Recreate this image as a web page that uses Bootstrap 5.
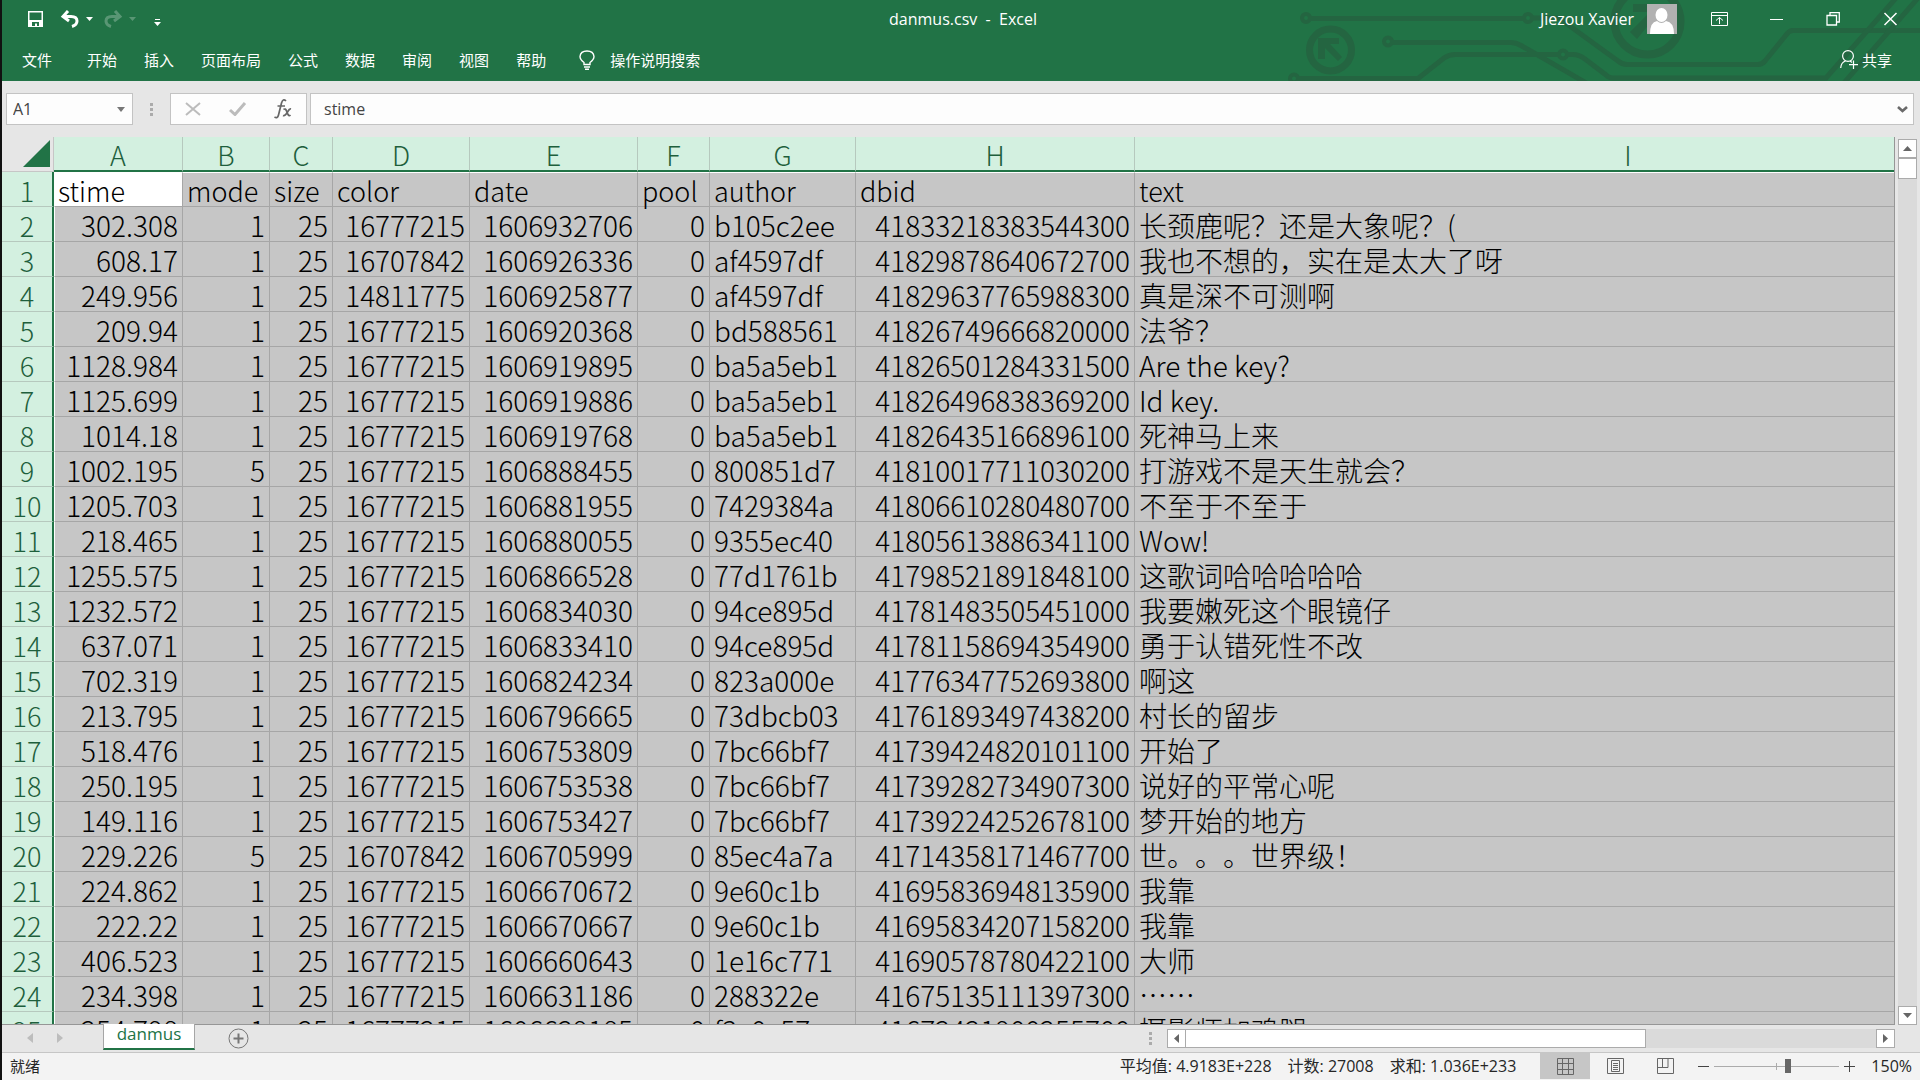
<!DOCTYPE html>
<html lang="zh-CN">
<head>
<meta charset="utf-8">
<meta name="viewport" content="width=device-width, initial-scale=1">
<title>danmus.csv - Excel</title>
<link rel="stylesheet" href="https://cdn.jsdelivr.net/npm/bootstrap@5.3.0/dist/css/bootstrap.min.css">
<style>
:root { --xl-green: #217346; --xl-line: #a6a6a6; --xl-head: #d3f0e0; --xl-chrome: #e6e6e6; }
body { font-family: "Open Sans", "Noto Sans CJK SC", sans-serif; font-size: 15px; line-height: 20px; color: #262626; background: var(--xl-chrome); border-left: 2px solid #111; }
button { background: none; border: 0; padding: 0; color: inherit; display: inline-flex; align-items: center; justify-content: center; flex: none; }
svg { display: block; flex: none; }
.ui-lg { font-size: 16px; }
.app-head { background: var(--xl-green); color: #fff; }
.circuit { position: absolute; right: 0; top: 0; }
.title-row { height: 38px; }
.title-row .side { flex: 1 1 0; }
.title-row .ui-lg { padding-bottom: 1px; }
.quick { padding-left: 25px; }
.quick .caret { margin: 0 10px 0 6px; }
.dim { opacity: .25; }
.win { gap: 40px; padding-right: 21px; }
.user { gap: 13px; margin-right: -6px; }
.ribbon-row { height: 43px; padding: 0 28px 0 20px; }
.ribbon-row a { color: #fff; text-decoration: none; }
.tabs { gap: 27px; }
.tabs a:first-child { margin-right: 8px; }
.tell { gap: 15px; margin-left: 33px; }
.formula-row { padding: 12px 6px 12px 4px; }
.fbox { height: 32px; background: #fdfdfd; border: 1px solid #c3c3c3; }
.fbox input { border: 0; background: none; outline: 0; min-width: 0; color: #444; padding: 0; }
.name-box { width: 127px; padding: 0 7px 0 6px; }
.fx-box { width: 137px; padding: 0 14px; margin-left: 17px; }
.text-box { margin-left: 3px; padding: 0 5px 0 13px; }
.dots { margin-left: 17px; }
.sheet-area { min-height: 0; }
.sheet-view { min-width: 0; overflow: hidden; border-bottom: 1px solid #969696; border-right: 1px solid #969696; }
.sheet { width: 2120px; table-layout: fixed; border-collapse: separate; border-spacing: 0; font-family: "Noto Sans CJK SC", sans-serif; font-weight: 300; font-size: 28px; line-height: 31px; color: #000; text-spacing-trim: space-all; font-feature-settings: "chws" 0, "halt" 0; }
.sheet th, .sheet td { padding: 3px 4px 0; height: 35px; white-space: nowrap; border: 0 solid var(--xl-line); font-weight: 300; }
.sheet th { font-size: 27px; }
.sheet thead th { background: var(--xl-head); color: #1e5f3c; text-align: center; line-height: 30px; border-right: 1px solid #b6c9be; border-bottom: 2px solid var(--xl-green); }
.sheet thead th.corner { background: var(--xl-chrome); border-right: 1px solid #c6c6c6; border-bottom: 1px solid #c6c6c6; vertical-align: bottom; padding: 0 3px 4px; }
.sheet tbody th { background: var(--xl-head); color: #1e5f3c; text-align: center; border-bottom: 1px solid #b6c9be; border-right: 2px solid var(--xl-green); }
.sheet td { background: #c6c6c6; border-right-width: 1px; border-bottom-width: 1px; text-align: right; }
.sheet tbody td:nth-child(2) { border-left: 1px solid #fff; }
.sheet td.txt { text-align: left; }
.sheet td:last-child { text-align: left; }
.sheet tbody tr:first-child td { border-top: 1px solid #fff; font-size: 27px; padding-top: 2px; }
.sheet tbody tr:first-child td:nth-child(2) { background: #fff; padding-left: 3px; }
.vbar { width: 19px; flex: none; margin: 2px 3px 0 3px; background: #dadada; }
.sbtn { background: #fff; border: 1px solid #ababab; width: 19px; height: 19px; }
.vthumb { background: #fff; border: 1px solid #ababab; height: 21px; }
.tab-row { height: 29px; border-bottom: 1px solid #c6c6c6; }
.tab-nav { width: 101px; height: 27px; padding-left: 25px; }
.sheet-tab { background: #fff; color: var(--xl-green); border: 1px solid #a6a6a6; border-top: 0; border-bottom: 2px solid var(--xl-green); margin-top: -1px; height: 26px; width: 92px; font-size: 17px; line-height: 20px; text-align: center; text-decoration: none; position: relative; }
.add-tab { height: 27px; margin-left: 33px; }
.hbar { width: 728px; height: 19px; background: #dadada; margin: 4px 25px 0 11px; }
.hthumb { background: #fff; border: 1px solid #ababab; border-left: 0; width: 460px; height: 19px; }
.status-row { height: 27px; background: #f3f3f3; padding: 0 8px 1px 8px; }
.view-btn { width: 50px; height: 26px; }
.view-btn.on { background: #c6c6c6; }
.totals { gap: 16px; margin-right: 24px; }
.zoom-range { appearance: none; width: 125px; height: 17px; margin: 0 5px; background: linear-gradient(#ababab, #ababab) center / 100% 1px no-repeat, linear-gradient(#ababab, #ababab) center / 1px 7px no-repeat; }
.zoom-range::-webkit-slider-thumb { appearance: none; width: 6px; height: 14px; background: #666; border: 0; border-radius: 0; }
</style>
<script src="https://cdn.jsdelivr.net/npm/bootstrap@5.3.0/dist/js/bootstrap.bundle.min.js"></script>
</head>
<body class="d-flex flex-column vh-100 overflow-hidden">

<header class="app-head position-relative">
  <svg class="circuit" width="640" height="81" viewBox="1280 0 640 81" fill="none" stroke="#246541" stroke-width="5" aria-hidden="true">
    <g stroke-width="4">
      <circle cx="1306" cy="18" r="4"/><circle cx="1528" cy="18" r="4"/><circle cx="1388" cy="41.500" r="4"/><circle cx="1563" cy="54.500" r="4"/><circle cx="1294" cy="78.500" r="4"/>
    </g>
    <path d="M1311 18.500H1523M1533 18H1558Q1562 18 1567 24L1600 48L1618 61Q1622 64.500 1627 64.500H1758Q1762 64.500 1765 61L1786 35Q1789 30.500 1793 30.500H1920"/>
    <path d="M1393 42.500H1511Q1516 42.500 1521 45.500L1588 84"/>
    <path d="M1299 78.500H1418L1444 58Q1449 54.500 1455 54.500H1558M1568 54.500H1573Q1579 54.500 1585 59L1606 75Q1609 78 1613 78H1826L1896 -2M1843 84L1918 -2"/>
    <circle cx="1330.500" cy="50" r="21" stroke-width="7"/>
    <path d="M1318 38H1339V44H1330L1342 57L1338 61L1325 48V59H1318Z" fill="#246541" stroke="none"/>
    <circle cx="1647.500" cy="21.500" r="33" stroke-width="8"/>
    <path d="M1633 4H1663V34H1655V17L1637 39L1630 32L1650 12H1633Z" fill="#246541" stroke="none"/>
  </svg>
  <div class="title-row d-flex align-items-center position-relative">
    <div class="side quick d-flex align-items-center">
      <button aria-label="保存"><svg width="17" height="17" viewBox="0 0 17 17"><path d="M1 0H16V16H1Z" fill="#fff"/><path d="M2.500 1.500H14.500V9H2.500Z" fill="#217346"/><path d="M5 11H12V15H10V12.500H8V15H5Z" fill="#217346"/></svg></button>
      <button class="ms-3" aria-label="撤消"><svg width="20" height="18" viewBox="0 0 20 18"><path d="M8 1L3 6.500L9 11M4 6.500H11Q17 6.500 17 11Q17 15 12 16.500" fill="none" stroke="#fff" stroke-width="3"/></svg></button>
      <svg class="caret" width="7" height="4" viewBox="0 0 7 4"><path d="M0 0H7L3.500 4Z" fill="#fff"/></svg>
      <button class="dim" aria-label="恢复"><svg width="20" height="18" viewBox="0 0 20 18"><path d="M12 1L17 6.500L11 11M16 6.500H9Q3 6.500 3 11Q3 15 8 16.500" fill="none" stroke="#fff" stroke-width="3"/></svg></button>
      <svg class="caret dim" width="7" height="4" viewBox="0 0 7 4"><path d="M0 0H7L3.500 4Z" fill="#fff"/></svg>
      <button class="ms-2" aria-label="自定义快速访问工具栏"><svg width="7" height="14" viewBox="0 0 7 14"><path d="M1 7H6V8H1ZM0 10H7L3.500 14Z" fill="#fff"/></svg></button>
    </div>
    <div class="ui-lg px-2">danmus.csv&nbsp; -&nbsp; Excel</div>
    <div class="side win d-flex align-items-center justify-content-end">
      <div class="user d-flex align-items-center">
        <span class="ui-lg">Jiezou Xavier</span>
        <svg width="30" height="30" viewBox="0 0 30 30"><path d="M0 0H30V30H0Z" fill="#b1b1b1"/><ellipse cx="14.500" cy="11" rx="6" ry="7" fill="#fff"/><path d="M3 30Q3 18 10 17Q14.500 21 19 17Q27 18 27 30Z" fill="#fff"/></svg>
      </div>
      <button aria-label="功能区显示选项"><svg width="17" height="14" viewBox="0 0 17 14" fill="none" stroke="#fff"><path d="M.5 .5H16.500V13.500H.5ZM0 3.500H17M8.500 12V5.500M5 8.500L8.500 5.500L12 8.500"/></svg></button>
      <button aria-label="最小化"><svg width="17" height="14" viewBox="0 0 17 14"><path d="M2 7H15V8H2Z" fill="#fff"/></svg></button>
      <button aria-label="向下还原"><svg width="17" height="14" viewBox="0 0 17 14" fill="none" stroke="#fff" stroke-width="1.300"><path d="M2 3.500H11.500V13H2ZM5 3V.7H14.300V10H12"/></svg></button>
      <button aria-label="关闭"><svg width="17" height="14" viewBox="0 0 17 14" fill="none" stroke="#fff" stroke-width="1.500"><path d="M2.500 1L14.500 13M14.500 1L2.500 13"/></svg></button>
    </div>
  </div>
  <div class="ribbon-row d-flex align-items-center position-relative">
    <nav class="tabs d-flex">
      <a href="#">文件</a><a href="#">开始</a><a href="#">插入</a><a href="#">页面布局</a><a href="#">公式</a><a href="#">数据</a><a href="#">审阅</a><a href="#">视图</a><a href="#">帮助</a>
    </nav>
    <a class="tell d-flex align-items-center" href="#">
      <svg width="16" height="20" viewBox="0 0 16 20" fill="none" stroke="#fff" stroke-width="1.400"><path d="M5 14.500V12.500Q1 9.500 1 6.500Q1.500 1 8 1Q14.500 1 15 6.500Q15 9.500 11 12.500V14.500ZM5 17H11M6 19.300H10"/></svg>
      操作说明搜索</a>
    <a class="d-flex align-items-center gap-1 ms-auto" href="#">
      <svg width="18" height="19" viewBox="0 0 18 19" fill="none" stroke="#fff" stroke-width="1.200"><circle cx="8" cy="6" r="5.400"/><path d="M.7 18Q1 12.500 5.500 11M10 11L12 12.500M13.500 10.500V19M9 14.700H18"/></svg>
      共享</a>
  </div>
</header>

<div class="formula-row ui-lg d-flex align-items-center">
  <div class="fbox name-box d-flex align-items-center">
    <input class="flex-grow-1 w-100" type="text" value="A1" aria-label="名称框">
    <button aria-label="名称列表"><svg width="8" height="5" viewBox="0 0 8 5"><path d="M0 0H8L4 5Z" fill="#777"/></svg></button>
  </div>
  <svg class="dots" width="3" height="13" viewBox="0 0 3 13"><path d="M0 0H3V3H0ZM0 5H3V8H0ZM0 10H3V13H0Z" fill="#ababab"/></svg>
  <div class="fbox fx-box d-flex align-items-center justify-content-between">
    <button aria-label="取消"><svg width="16" height="14" viewBox="0 0 16 14"><path d="M1 1L15 13M15 1L1 13" stroke="#bcbcbc" stroke-width="2"/></svg></button>
    <button aria-label="输入"><svg width="18" height="14" viewBox="0 0 18 14"><path d="M1 8L6 12.500L16 1" fill="none" stroke="#bcbcbc" stroke-width="3"/></svg></button>
    <button aria-label="插入函数"><svg width="18" height="20" viewBox="0 0 18 20" fill="none" stroke="#666" stroke-width="1.700"><path d="M12 2Q9 -1 7.500 4L4.500 16Q3.500 20 .5 18M3.500 7H11M9.500 10.500Q11.500 9 12.500 12L14 15.500Q15 17.500 16.500 16M17 10Q15.500 9.500 13.500 13Q11 17.500 9 16.500"/></svg></button>
  </div>
  <div class="fbox text-box d-flex align-items-center flex-grow-1">
    <input class="flex-grow-1" type="text" value="stime" aria-label="编辑栏">
    <button aria-label="展开编辑栏"><svg width="11" height="7" viewBox="0 0 11 7"><path d="M1 1L5.500 5L10 1" fill="none" stroke="#6a6a6a" stroke-width="2.600"/></svg></button>
  </div>
</div>

<main class="sheet-area d-flex flex-grow-1">
  <div class="sheet-view flex-grow-1">
    <table class="sheet">
      <colgroup><col style="width:52px"><col style="width:129px"><col style="width:87px"><col style="width:63px"><col style="width:137px"><col style="width:168px"><col style="width:72px"><col style="width:146px"><col style="width:279px"><col></colgroup>
      <thead><tr><th class="corner" aria-label="全选"><svg class="ms-auto" width="27" height="27" viewBox="0 0 27 27"><path d="M27 0V27H0Z" fill="#217346"/></svg></th><th>A</th><th>B</th><th>C</th><th>D</th><th>E</th><th>F</th><th>G</th><th>H</th><th>I</th></tr></thead>
      <tbody id="rows"></tbody>
    </table>
  </div>
  <div class="vbar d-flex flex-column">
    <button class="sbtn w-100" aria-label="向上滚动"><svg width="9" height="5" viewBox="0 0 9 5"><path d="M0 5H9L4.500 0Z" fill="#666"/></svg></button>
    <div class="vthumb"></div>
    <button class="sbtn w-100 mt-auto" aria-label="向下滚动"><svg width="9" height="5" viewBox="0 0 9 5"><path d="M0 0H9L4.500 5Z" fill="#666"/></svg></button>
  </div>
</main>

<div class="tab-row d-flex align-items-start">
  <div class="tab-nav d-flex align-items-center">
    <button aria-label="上一个工作表"><svg width="6" height="10" viewBox="0 0 6 10"><path d="M6 0V10L0 5Z" fill="#bdbdbd"/></svg></button>
    <button class="ms-4" aria-label="下一个工作表"><svg width="6" height="10" viewBox="0 0 6 10"><path d="M0 0V10L6 5Z" fill="#bdbdbd"/></svg></button>
  </div>
  <a class="sheet-tab" href="#">danmus</a>
  <button class="add-tab" aria-label="新工作表"><svg width="21" height="21" viewBox="0 0 21 21" fill="none" stroke="#777"><circle cx="10.500" cy="10.500" r="9.500"/><path d="M10.500 5.500V15.500M5.500 10.500H15.500" stroke-width="2"/></svg></button>
  <svg class="align-self-center ms-auto me-1" width="3" height="13" viewBox="0 0 3 13"><path d="M0 0H3V3H0ZM0 5H3V8H0ZM0 10H3V13H0Z" fill="#ababab"/></svg>
  <div class="hbar d-flex">
    <button class="sbtn" aria-label="向左滚动"><svg width="5" height="9" viewBox="0 0 5 9"><path d="M5 0V9L0 4.500Z" fill="#666"/></svg></button>
    <div class="hthumb"></div>
    <button class="sbtn ms-auto" aria-label="向右滚动"><svg width="5" height="9" viewBox="0 0 5 9"><path d="M0 0V9L5 4.500Z" fill="#666"/></svg></button>
  </div>
</div>

<footer class="status-row d-flex align-items-center">
  <span class="me-auto">就绪</span>
  <div class="totals ui-lg d-flex"><span>平均值: 4.9183E+228</span><span>计数: 27008</span><span>求和: 1.036E+233</span></div>
  <button class="view-btn on" aria-label="普通"><svg width="17" height="17" viewBox="0 0 17 17" fill="none" stroke="#666"><path d="M.5 .5H16.500V16.500H.5ZM5.500 0V17M11.500 0V17M0 5.500H17M0 11.500H17"/></svg></button>
  <button class="view-btn" aria-label="页面布局"><svg width="17" height="16" viewBox="0 0 17 16" fill="none" stroke="#666"><path d="M.5 .5H16.500V15.500H.5ZM4.500 2.500H12.500V13.500H4.500ZM6 5.500H11M6 7.500H11M6 9.500H11M6 11.500H11"/></svg></button>
  <button class="view-btn" aria-label="分页预览"><svg width="17" height="16" viewBox="0 0 17 16" fill="none" stroke="#666"><path d="M.5 .5H16.500V15.500H.5ZM5.500 .5V9.500M0 9.500H11V0"/></svg></button>
  <button class="ms-2" aria-label="缩小"><svg width="11" height="11" viewBox="0 0 11 11"><path d="M0 5H11V6H0Z" fill="#444"/></svg></button>
  <input class="zoom-range" type="range" min="0" max="100" value="59" aria-label="缩放">
  <button aria-label="放大"><svg width="11" height="11" viewBox="0 0 11 11"><path d="M0 5H11V6H0ZM5 0H6V11H5Z" fill="#444"/></svg></button>
  <button class="ui-lg ms-3" aria-label="缩放级别">150%</button>
</footer>

<script>
const data = `stime|mode|size|color|date|pool|author|dbid|text
302.308|1|25|16777215|1606932706|0|b105c2ee|41833218383544300|长颈鹿呢？还是大象呢？(
608.17|1|25|16707842|1606926336|0|af4597df|41829878640672700|我也不想的，实在是太大了呀
249.956|1|25|14811775|1606925877|0|af4597df|41829637765988300|真是深不可测啊
209.94|1|25|16777215|1606920368|0|bd588561|41826749666820000|法爷？
1128.984|1|25|16777215|1606919895|0|ba5a5eb1|41826501284331500|Are the key?
1125.699|1|25|16777215|1606919886|0|ba5a5eb1|41826496838369200|Id key.
1014.18|1|25|16777215|1606919768|0|ba5a5eb1|41826435166896100|死神马上来
1002.195|5|25|16777215|1606888455|0|800851d7|41810017711030200|打游戏不是天生就会？
1205.703|1|25|16777215|1606881955|0|7429384a|41806610280480700|不至于不至于
218.465|1|25|16777215|1606880055|0|9355ec40|41805613886341100|Wow!
1255.575|1|25|16777215|1606866528|0|77d1761b|41798521891848100|这歌词哈哈哈哈哈
1232.572|1|25|16777215|1606834030|0|94ce895d|41781483505451000|我要嫩死这个眼镜仔
637.071|1|25|16777215|1606833410|0|94ce895d|41781158694354900|勇于认错死性不改
702.319|1|25|16777215|1606824234|0|823a000e|41776347752693800|啊这
213.795|1|25|16777215|1606796665|0|73dbcb03|41761893497438200|村长的留步
518.476|1|25|16777215|1606753809|0|7bc66bf7|41739424820101100|开始了
250.195|1|25|16777215|1606753538|0|7bc66bf7|41739282734907300|说好的平常心呢
149.116|1|25|16777215|1606753427|0|7bc66bf7|41739224252678100|梦开始的地方
229.226|5|25|16707842|1606705999|0|85ec4a7a|41714358171467700|世。。。世界级！
224.862|1|25|16777215|1606670672|0|9e60c1b|41695836948135900|我靠
222.22|1|25|16777215|1606670667|0|9e60c1b|41695834207158200|我靠
406.523|1|25|16777215|1606660643|0|1e16c771|41690578780422100|大师
234.398|1|25|16777215|1606631186|0|288322e|41675135111397300|……
254.798|1|25|16777215|1606629185|0|f3c0c57|41672421900255700|摄影师加鸡腿`;
document.getElementById('rows').innerHTML = data.split('\n').map((line, r) =>
  `<tr><th scope="row">${r + 1}</th>` + line.split('|').map((v, c) =>
    `<td${r === 0 || c === 6 ? ' class="txt"' : ''}>${v}</td>`).join('') + '</tr>').join('');
</script>
</body>
</html>
